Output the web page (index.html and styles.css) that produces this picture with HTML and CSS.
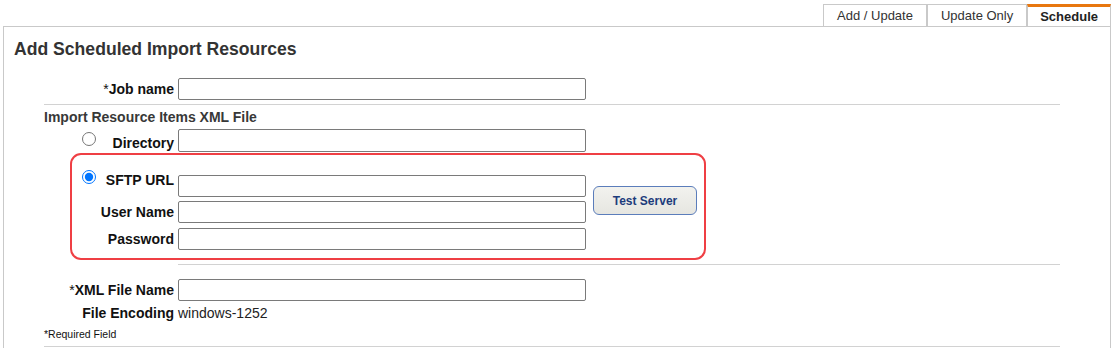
FILE: index.html
```html
<!DOCTYPE html>
<html>
<head>
<meta charset="utf-8">
<link rel="stylesheet" href="styles.css">
</head>
<body>
<div class="page">
  <div class="tabs">
    <div class="tab">Add / Update</div>
    <div class="tab">Update Only</div>
    <div class="tab active">Schedule</div>
  </div>
  <div class="panel">
    <h1 class="title">Add Scheduled Import Resources</h1>
    <div class="form">
      <div class="row">
        <label class="lbl"><span class="req">*</span>Job name</label>
        <input class="field" type="text">
      </div>
      <div class="rule"></div>
      <div class="section">Import Resource Items XML File</div>
      <div class="row row-dir">
        <div class="lbl lbl-radio dir-radio">
          <input class="radio" type="radio" name="src">
          <span class="lbl-text lbl-low">Directory</span>
        </div>
        <input class="field" type="text">
      </div>
      <div class="sftp-box">
        <div class="sftp-fields">
          <div class="row row-top">
            <div class="lbl lbl-radio sftp-radio">
              <input class="radio" type="radio" name="src" checked>
              <span class="lbl-text lbl-high">SFTP URL</span>
            </div>
            <input class="field field-low" type="text">
          </div>
          <div class="row row-user">
            <label class="lbl">User Name</label>
            <input class="field" type="text">
          </div>
          <div class="row row-pass">
            <label class="lbl">Password</label>
            <input class="field" type="password">
          </div>
        </div>
        <button class="test-btn" type="button">Test Server</button>
      </div>
      <div class="rule rule-short"></div>
      <div class="row row-xml">
        <label class="lbl"><span class="req">*</span>XML File Name</label>
        <input class="field" type="text">
      </div>
      <div class="row row-enc">
        <span class="lbl">File Encoding</span>
        <span class="val">windows-1252</span>
      </div>
      <div class="note">*Required Field</div>
      <div class="rule rule-last"></div>
    </div>
  </div>
</div>
</body>
</html>
```
FILE: styles.css
```css
html, body {
  margin: 0;
  padding: 0;
  background: #ffffff;
}
body {
  font-family: "Liberation Sans", Arial, sans-serif;
  color: #111;
  overflow: hidden;
}
.page {
  padding-top: 4px;
}
.tabs {
  display: flex;
  justify-content: flex-end;
  margin-right: 3px;
}
.tab {
  height: 22px;
  box-sizing: border-box;
  line-height: 21px;
  padding: 0 13px;
  border: 1px solid #c9c9c9;
  border-bottom: none;
  font-size: 13px;
  color: #333;
  background: #fff;
}
.tab.active {
  border-top: 3px solid #e8770f;
  line-height: 19px;
  padding: 0 12px;
  font-weight: bold;
  color: #222;
}
.panel {
  margin: 0 3px;
  border: 1px solid #c9c9c9;
  border-bottom: none;
  height: 330px;
  box-sizing: border-box;
}
.title {
  margin: 12px 0 0 10px;
  font-size: 17.6px;
  line-height: 20px;
  font-weight: bold;
  color: #333;
}
.form {
  margin-left: 40px;
  width: 1016px;
}
.row {
  display: flex;
  align-items: center;
  gap: 4px;
  height: 22px;
  margin-top: 4px;
}
.form > .row:first-child {
  margin-top: 19px;
}
.lbl {
  width: 130px;
  flex: none;
  text-align: right;
  font-size: 14px;
  font-weight: bold;
  color: #111;
  line-height: 16px;
}
.req {
  font-weight: normal;
}
.field {
  width: 408px;
  height: 22px;
  box-sizing: border-box;
  margin: 0;
  border: 1px solid #7a7a7a;
  border-radius: 2px;
  background: #fff;
  padding: 0 3px;
}
.rule {
  height: 1px;
  background: #d2d2d2;
  margin-top: 4px;
}
.section {
  margin-top: 4px;
  font-size: 14px;
  line-height: 16px;
  font-weight: bold;
  color: #383838;
}
.row-dir {
  height: 23px;
}
.row-dir .field {
  height: 23px;
}
.lbl-radio {
  display: flex;
  align-items: center;
}
.lbl-text {
  margin-left: auto;
}
.lbl-low {
  margin-top: 5px;
}
.radio {
  width: 14px;
  height: 14px;
  margin: 0;
  flex: none;
}
.dir-radio .radio {
  margin-left: 38px;
  margin-top: -3px;
}
.sftp-box {
  margin-top: 1px;
  margin-left: 26px;
  width: 636px;
  box-sizing: border-box;
  border: 2px solid #ef3f44;
  border-radius: 11px;
  padding: 14px 0 8px 0;
  display: flex;
  align-items: flex-start;
}
.sftp-fields .lbl {
  width: 102px;
}
.sftp-fields .row:first-child {
  margin-top: 0;
}
.row-top {
  align-items: flex-start;
  height: 28px;
}
.sftp-radio {
  align-items: flex-start;
}
.sftp-radio .radio {
  margin-left: 10px;
  margin-top: 1px;
}
.lbl-high {
  margin-top: 3px;
}
.field-low {
  margin-top: 6px;
}
.row-pass {
  margin-top: 5px;
}
.test-btn {
  margin-left: 7px;
  margin-top: 17px;
  width: 104px;
  height: 29px;
  box-sizing: border-box;
  border: 1.5px solid #5b7dbb;
  border-radius: 6px;
  background: linear-gradient(#f2f2ee, #e6e6e1);
  color: #1d3c7c;
  font-family: "Liberation Sans", Arial, sans-serif;
  font-size: 12px;
  font-weight: bold;
  padding: 0;
}
.rule-short {
  margin-left: 134px;
}
.row-xml {
  margin-top: 14px;
}
.row-enc {
  height: 16px;
}
.val {
  font-size: 14px;
  line-height: 16px;
  color: #222;
}
.note {
  margin-top: 7px;
  font-size: 10.5px;
  line-height: 12px;
  color: #111;
}
.rule-last {
  margin-top: 6px;
}
```
